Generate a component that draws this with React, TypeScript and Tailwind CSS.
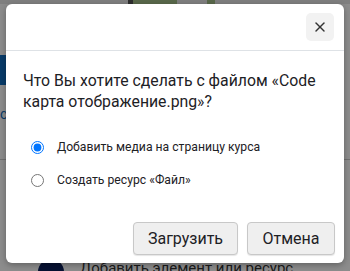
import { X } from 'lucide-react';

export default function App() {
  return (
    <div className="relative w-[350px] h-[271px] overflow-hidden bg-white font-['Roboto',sans-serif]">
      {/* page behind the backdrop */}
      <div className="absolute inset-0">
        <div className="flex h-[4px]">
          <div className="w-[128px] bg-[#e8e8e8]" />
          <div className="w-[5px] bg-[#555]" />
          <div className="w-[44px] bg-[#a3bd88]" />
          <div className="w-[30px] bg-[#e8e8e8]" />
          <div className="w-[8px] bg-[#a3bd88]" />
          <div className="flex-1 bg-[#e8e8e8]" />
        </div>
        <div className="mt-[51px] w-[6px] h-[30px] bg-[#0f6cbf]" />
        <div className="mt-[22px] text-[#0f6cbf] text-[14px] leading-none">c</div>
        <div className="mt-[38px] h-px bg-[#ccc]" />
        <div className="flex items-start gap-[16px] absolute left-[38px] top-[259px]">
          <div className="w-[26px] h-[26px] rounded-full bg-[#0b1f5c]" />
          <span className="text-[15px] leading-[18px] text-[#333]">Добавить элемент или ресурс</span>
        </div>
      </div>
      {/* backdrop */}
      <div className="absolute inset-0 bg-[#000]/45" />
      {/* modal */}
      <div className="absolute left-[6px] top-[4px] w-[338px] h-[259px] bg-white rounded-[6px] shadow-[0_2px_6px_rgba(0,0,0,0.3)] flex flex-col text-[#1d2125]">
        <div className="h-[47px] flex items-center justify-end pr-[10px] border-b border-[#dee2e6]">
          <button className="w-[28px] h-[28px] rounded-[5px] bg-[#f2f2f2] flex items-center justify-center">
            <X className="w-[16px] h-[16px] text-[#333]" strokeWidth={2.2} />
          </button>
        </div>
        <div className="px-[17px] pt-[19px] flex-1">
          <p className="text-[15.8px] leading-[21px]">
            Что Вы хотите сделать с файлом «Code карта отображение.png»?
          </p>
          <div className="mt-[26px] pl-[8px] flex flex-col gap-[15px] text-[12.2px]">
            <label className="flex items-center gap-[13px]">
              <input type="radio" name="action" defaultChecked className="w-[13px] h-[13px] m-0" />
              <span>Добавить медиа на страницу курса</span>
            </label>
            <label className="flex items-center gap-[13px]">
              <input type="radio" name="action" className="w-[13px] h-[13px] m-0" />
              <span>Создать ресурс «Файл»</span>
            </label>
          </div>
        </div>
        <div className="flex justify-end gap-[9px] pr-[9px] pb-[8px]">
          <button className="h-[33px] w-[105px] rounded-[4px] border border-[#c8c8c8] bg-[#efefef] text-[16px] shadow-[0_1px_1px_rgba(0,0,0,0.1)]">
            Загрузить
          </button>
          <button className="h-[33px] w-[88px] rounded-[4px] border border-[#c8c8c8] bg-[#efefef] text-[16px] shadow-[0_1px_1px_rgba(0,0,0,0.1)]">
            Отмена
          </button>
        </div>
      </div>
    </div>
  );
}
